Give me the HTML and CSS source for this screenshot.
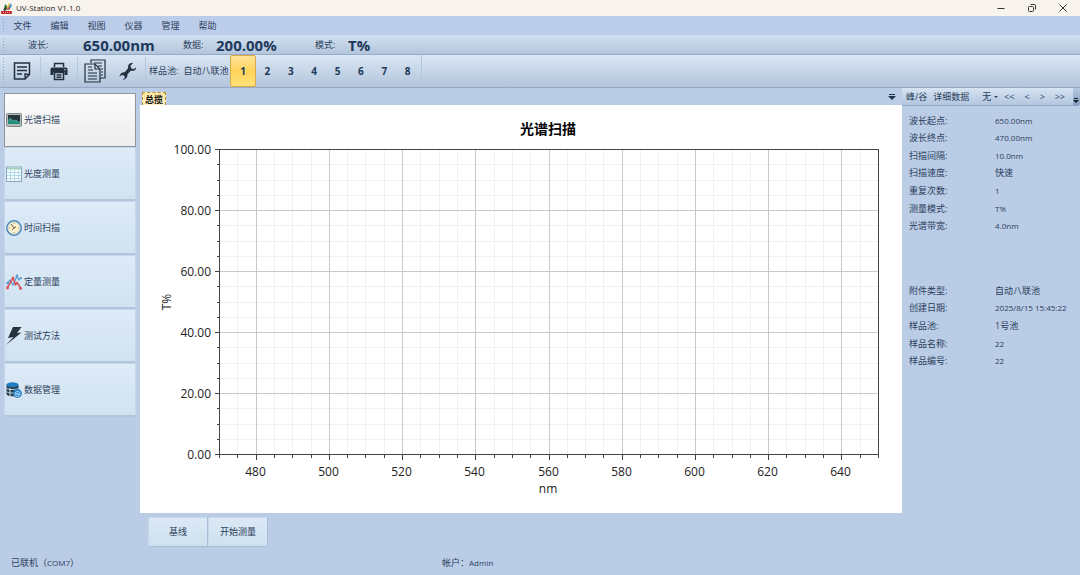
FILE: index.html
```html
<!DOCTYPE html>
<html lang="zh-CN">
<head>
<meta charset="utf-8">
<meta name="viewport" content="width=device-width, initial-scale=1">
<title>UV-Station V1.1.0</title>
<link rel="stylesheet" href="styles.css">
</head>
<body>
<div class="app">
  <header class="titlebar">
    <svg class="logo" viewBox="0 0 12 12" aria-hidden="true">
      <path d="M3 7 4 2l2 2-1 4z" fill="#1d8a4d"/><path d="M5 7 8 1l1 2-2 5z" fill="#f0b51e"/><path d="M6 8l4-7 1 3-3 4z" fill="#3aa0dc"/>
      <path d="M2 8 5 4l1 3-2 2z" fill="#3a3f46"/><path d="M6 8l3-4 0 3z" fill="#d33b2f"/>
      <rect x="0" y="9" width="11" height="3" rx="1" fill="#c8202a"/><path d="M2 10.500h7" stroke="#f4b9b9" stroke-dasharray="1 1"/>
    </svg>
    <span class="title">UV-Station V1.1.0</span>
    <div class="window-buttons">
      <button aria-label="最小化"><svg viewBox="0 0 10 10"><path d="M1.500 5.500h7"/></svg></button>
      <button aria-label="还原"><svg viewBox="0 0 10 10"><rect x="1.500" y="3.500" width="5" height="5" rx="1"/><path d="M3.500 1.500h4q1 0 1 1v4"/></svg></button>
      <button aria-label="关闭"><svg viewBox="0 0 10 10"><path d="M1.500 1.500l7 7M8.500 1.500l-7 7"/></svg></button>
    </div>
  </header>

  <nav class="menubar">
    <span class="grip"></span>
    <button>文件</button><button>编辑</button><button>视图</button><button>仪器</button><button>管理</button><button>帮助</button>
  </nav>

  <div class="readout">
    <span class="grip"></span>
    <span class="read-label wave">波长:</span><strong class="read-value wave-value">650.00nm</strong>
    <span class="read-label">数据:</span><strong class="read-value data-value">200.00%</strong>
    <span class="read-label">模式:</span><strong class="read-value">T%</strong>
  </div>

  <div class="toolbar">
    <span class="grip"></span>
    <button class="tool" aria-label="报告">
      <svg viewBox="0 0 20 20"><path d="M2.500 2h15v11.500L13 18H2.500z"/><path d="M17.500 13c-1 1-3 0-4.500 0 0 1.500 1 4-.5 5M5 6h10M5 9.500h10M5 13h5"/></svg>
    </button>
    <button class="tool" aria-label="打印">
      <svg viewBox="0 0 20 20"><path d="M5.500 6V2.500h9V6"/><path class="solid" stroke="none" d="M3 6.500h14q1.500 0 1.500 1.500v6h-3v-3h-11v3h-3V8q0-1.500 1.500-1.500z"/><path d="M5.500 11.500h9v7h-9zM7.500 14h5M7.500 16.300h5"/><circle cx="16" cy="8.700" r=".8" fill="#c5d5e6" stroke="none"/></svg>
    </button>
    <button class="tool large" aria-label="复制报告">
      <svg viewBox="0 0 24 24"><path d="M8 4V1h14v18h-5"/><path d="M2 5h10l5 5v13H2z"/><path d="M12 5v5h5M5 8h4M5 11h5M5 14h9M5 17h9M5 20h9M11 4h8M15 7h4M18 10h2M18 13h2M18 16h2"/></svg>
    </button>
    <button class="tool last" aria-label="设置">
      <svg viewBox="0 0 20 20"><path class="solid" stroke="none" d="M18.200 6.200 15.800 8.200 13.100 7.200 12.400 4.700 15 2.200C12.200 1.400 9.700 3.400 10 7.200L6.800 11.200C4.200 10.800 1.700 12.500 1.500 15.700L3.700 13.900 6.200 14.500 6.900 17 4.500 18.600C7.300 19 9.800 16.500 9.500 13.200L12.700 9.700C15.800 10.300 18.500 9 18.200 6.200z"/></svg>
    </button>
    <span class="cell-label">样品池:<span class="cell-kind">自动八联池</span></span>
    <div class="cells">
      <button class="cell active" aria-pressed="true">1</button><button class="cell">2</button><button class="cell">3</button><button class="cell">4</button><button class="cell">5</button><button class="cell">6</button><button class="cell">7</button><button class="cell">8</button>
    </div>
  </div>

  <div class="workspace">
    <aside class="sidebar">
      <button class="side-item selected">
        <svg viewBox="0 0 16 16"><rect x=".5" y="1.500" width="15" height="13" rx="1" fill="#b5bbbb" stroke="#7f8788"/><rect x="2" y="3" width="12" height="9" fill="#24363b"/><path d="M2 12V9l2-3 2 2 2 1 2-1 2 2 2 0v2z" fill="#218d7b"/><path d="M2 9l2-3 2 2 2 1 2-1 2 2h2" fill="none" stroke="#67c2b4" stroke-width=".7"/></svg>光谱扫描</button>
      <button class="side-item">
        <svg viewBox="0 0 16 16"><rect x=".5" y="1" width="15" height="14.500" fill="#f5fcff" stroke="#88a9bf"/><path d="M1 2.500h14" stroke="#a2d3b6" stroke-width="2"/><path d="M1 6.500h14M1 9.500h14M1 12.500h14M4.500 4v11M8.500 4v11M12.500 4v11" stroke="#a8d2e5" stroke-width=".8"/></svg>光度测量</button>
      <button class="side-item">
        <svg viewBox="0 0 16 16"><circle cx="8" cy="8" r="7.200" fill="#fbf0c7" stroke="#4685bd" stroke-width="1.500"/><circle cx="8" cy="8" r="6" fill="none" stroke="#b6cfdd" stroke-width=".7"/><path d="M5 4l3 4-2 2M8 8l2-1" fill="none" stroke="#665947"/><path d="M8 3v1M13 8h-1M8 13v-1M3 8h1" stroke="#a99b72"/></svg>时间扫描</button>
      <button class="side-item">
        <svg viewBox="0 0 16 16"><path d="M1 9.500 4 6l3 5 4-9 2 4 2-2" fill="none" stroke="#5a9ed2" stroke-width="1.300"/><g fill="#5a9ed2"><circle cx="1.500" cy="9" r="1.300"/><circle cx="11" cy="2" r="1.400"/><circle cx="15" cy="4" r="1.100"/></g><path d="M1 14l6-10 2.500 6.500L11 8.500l4 6" fill="none" stroke="#d65056" stroke-width="1.500"/><g fill="#d65056"><circle cx="1.500" cy="14" r="1.400"/><circle cx="7" cy="4" r="1.300"/><circle cx="9.500" cy="10" r="1.200"/><circle cx="14.500" cy="14.500" r="1.400"/></g></svg>定量测量</button>
      <button class="side-item">
        <svg viewBox="0 0 16 18"><path d="M7 0 15.500 0 11 6 15.500 5.500 0 18 7.500 10 2 11z" fill="#24333e"/></svg>测试方法</button>
      <button class="side-item">
        <svg viewBox="0 0 16 16"><path d="M.5 3v9c0 3 12 3 12 0V3z" fill="#293d4e"/><ellipse cx="6.500" cy="2.800" rx="6" ry="2.500" fill="#237dc2"/><path d="M.5 6c1 2 11 2 12 0M.5 9.500c1 2 11 2 12 0" fill="none" stroke="#b9d5e9"/><path d="M4 6v8" stroke="#d5e4ef"/><circle cx="11.500" cy="11.500" r="4.400" fill="#2382ca"/><path d="M13.500 13.500a2.500 2.500 0 1 1 .5-2q0 1.500-1 1.500t-1-1.500a.8.8 0 1 0-.5 1" fill="none" stroke="#e5f4ff" stroke-width=".8"/></svg>数据管理</button>
    </aside>

    <main class="center">
      <div class="tabs">
        <button class="tab">总揽</button>
        <button class="tab-menu" aria-label="标签列表"><svg viewBox="0 0 8 8"><path d="M1 1.500h6" stroke="#1d344e"/><path d="M0 3h8L4 7z" fill="#1d344e"/></svg></button>
      </div>
      <div class="chart-area">
        <svg class="chart" id="chart" viewBox="0 0 762 408" role="img" aria-label="光谱扫描"></svg>
      </div>
      <div class="actions"><button class="action">基线</button><button class="action">开始测量</button></div>
    </main>

    <aside class="details">
      <div class="detail-bar">
        <div class="detail-tools">
          <button class="peak">峰/谷</button><button class="more">详细数据</button>
          <span class="choice"><select aria-label="峰谷选择"><option>无</option></select></span>
          <div class="pager"><button>&lt;&lt;</button><button>&lt;</button><button>&gt;</button><button>&gt;&gt;</button></div>
        </div>
        <button class="overflow" aria-label="更多"><svg viewBox="0 0 6 6"><path d="M1 .5h4" stroke="#111e2c"/><path d="M0 2h6L3 5z" fill="#111e2c"/></svg></button>
      </div>
      <dl class="facts scan">
        <dt>波长起点:</dt><dd>650.00nm</dd>
        <dt>波长终点:</dt><dd>470.00nm</dd>
        <dt>扫描间隔:</dt><dd>10.0nm</dd>
        <dt>扫描速度:</dt><dd class="han">快速</dd>
        <dt>重复次数:</dt><dd>1</dd>
        <dt>测量模式:</dt><dd>T%</dd>
        <dt>光谱带宽:</dt><dd>4.0nm</dd>
      </dl>
      <dl class="facts sample">
        <dt>附件类型:</dt><dd class="han">自动八联池</dd>
        <dt>创建日期:</dt><dd>2025/8/15 15:45:22</dd>
        <dt>样品池:</dt><dd class="han">1号池</dd>
        <dt>样品名称:</dt><dd>22</dd>
        <dt>样品编号:</dt><dd>22</dd>
      </dl>
    </aside>
  </div>

  <footer class="statusbar"><span>已联机（<span class="latin">COM7</span>）</span><span>帐户：<span class="latin">Admin</span></span></footer>
</div>
<script src="chart.js"></script>
</body>
</html>
```

FILE: styles.css
```css
* { box-sizing: border-box; }

body {
  margin: 0;
  background: #bacce6;
  color: #2b405c;
  font-family: "Open Sans", "Noto Sans CJK SC", sans-serif;
  font-size: 9px;
  line-height: 12px;
}

button, select {
  margin: 0;
  padding: 0;
  border: 0;
  background: none;
  color: inherit;
  font: inherit;
  white-space: nowrap;
}

svg { display: block; flex: none; }

.app { display: flex; flex-direction: column; min-height: 100vh; }

.titlebar {
  display: flex;
  align-items: center;
  height: 16px;
  padding-left: 1px;
  background: #f8f3ec;
  color: #252525;
}
.logo { width: 12px; height: 12px; }
.title { margin-left: 3px; font-size: 8px; }
.window-buttons { display: flex; margin-left: auto; padding-right: 2px; }
.window-buttons button {
  display: flex;
  align-items: center;
  justify-content: center;
  width: 31px;
  height: 14px;
}
.window-buttons svg { width: 10px; height: 10px; fill: none; stroke: #333; }

.grip {
  align-self: stretch;
  width: 1px;
  margin: 3px 0 3px 3px;
  background: repeating-linear-gradient(#8ba2c2 0 1px, transparent 1px 3px) 0 0 / 1px 100% no-repeat;
}

.menubar { display: flex; align-items: center; height: 19px; background: #bccde9; }
.menubar button { width: 37px; }

.readout {
  display: flex;
  align-items: center;
  height: 20px;
  background: linear-gradient(#d2e1f0, #b3c5dc);
  border-bottom: 1px solid #99abc4;
}
.read-label { width: 33px; }
.wave { width: 56px; padding-left: 24px; }
.read-value {
  color: #1e395b;
  font-size: 15px;
  line-height: 16px;
}
.wave-value { width: 100px; margin-left: 23px; }
.data-value { width: 99px; }

.toolbar {
  display: flex;
  align-items: center;
  height: 33px;
  background: linear-gradient(#dae7f4, #b3c5dc);
  border-bottom: 1px solid #99abc4;
}
.tool {
  display: flex;
  align-items: center;
  justify-content: center;
  width: 37px;
  height: 28px;
  border-right: 1px solid #b5c7db;
}
.tool svg { width: 20px; height: 20px; fill: none; stroke: #23303e; stroke-width: 1.5; }
.tool .solid { fill: #23303e; }
.tool.large { width: 33px; border-right: 0; }
.tool.large svg { width: 24px; height: 26px; stroke-width: 1.2; }
.tool.last { width: 35px; }
.cell-label { display: flex; align-items: center; margin-left: 3px; }
.cell-kind { margin-left: 5px; }
.cells { display: flex; align-items: center; width: 192px; margin-left: 2px; padding-right: 2px; border-right: 1px solid #b5c7db; }
.cell {
  flex: 1;
  height: 32px;
  color: #203956;
  font-size: 10px;
  font-weight: 700;
}
.cell.active {
  border: 1px solid #dda94d;
  border-radius: 2px;
  background: linear-gradient(#ffe39a, #ffd45a 50%, #ffe27a);
}

.workspace { display: flex; flex: 1; }

.sidebar { display: flex; flex: none; flex-direction: column; width: 140px; padding: 5px 4px; }
.side-item {
  display: flex;
  align-items: center;
  gap: 2px;
  height: 54px;
  padding-left: 1px;
  border: 1px solid #c7d7e9;
  border-bottom: 2px solid #b2c5da;
  background: linear-gradient(#deebf8, #d0e2f0);
}
.side-item svg { width: 16px; height: 18px; }
.side-item.selected {
  border: 1px solid #8d959f;
  background: linear-gradient(#fcfcfc, #ededee);
}

.center { display: flex; flex: 1; flex-direction: column; min-width: 0; }
.tabs { display: flex; align-items: flex-end; justify-content: space-between; height: 17px; padding: 0 6px 0 2px; }
.tab {
  width: 24px;
  height: 13px;
  border: 1px dashed #b78c36;
  border-bottom: 0;
  background: linear-gradient(#ffe79b, #fff2c5);
  color: #111;
  font-weight: 700;
  line-height: 11px;
}
.tab-menu { align-self: center; }
.tab-menu svg { width: 8px; height: 8px; }
.chart-area { flex: 1; background: #fff; }
.chart { width: 100%; height: auto; }
.chart text { fill: #222; font-size: 12px; }
.chart .chart-title { fill: #000; font-size: 14px; font-weight: 700; }
.chart .minor { stroke: #f1f1f1; }
.chart .major { stroke: #c9c9c9; }
.chart .axis { fill: none; stroke: #444; }
.chart line, .chart rect { shape-rendering: crispEdges; }

.actions { display: flex; height: 37px; padding: 4px 8px 3px; }
.action {
  width: 60px;
  border: 1px solid #c5d9eb;
  border-right-color: #aabfd7;
  border-bottom-color: #aabfd7;
  background: linear-gradient(#dce9f6, #cee1ee);
}

.details { flex: none; width: 178px; }
.detail-bar { display: flex; height: 18px; }
.detail-tools {
  display: flex;
  flex: 1;
  align-items: center;
  padding-left: 4px;
  border-bottom: 1px solid #94a9c6;
  background: linear-gradient(#d6e4f2, #b3c6df);
}
.more { margin-left: 6px; }
.choice { display: flex; align-items: center; margin-left: 13px; }
.choice::after {
  content: "";
  margin-left: 2px;
  border: 2px solid transparent;
  border-top-color: #2b405c;
  border-bottom: 0;
}
.choice select { appearance: none; width: 10px; }
.pager { display: flex; flex: 1; justify-content: space-between; margin: 0 8px 0 6px; }
.overflow {
  display: flex;
  align-items: flex-end;
  width: 7px;
  padding-bottom: 2px;
  border-radius: 0 3px 3px 0;
  background: linear-gradient(#b3c7e1, #879fc0);
}
.overflow svg { width: 6px; height: 6px; }

.facts {
  display: grid;
  grid-template-columns: 86px 1fr;
  grid-auto-rows: 1fr;
  align-items: center;
  margin: 0;
  padding-left: 7px;
}
.facts dd { margin: 0; font-size: 8px; white-space: nowrap; }
.facts .han { font-size: 9px; }
.scan { height: 123px; margin-top: 6px; }
.sample { height: 88px; margin-top: 47px; }

.latin { font-size: 8px; }
.statusbar { display: grid; grid-template-columns: 431px 1fr; align-items: center; height: 25px; padding-left: 11px; }
```

FILE: chart.js
```js
const chart = document.getElementById("chart");
const plot = { left: 79, right: 738, top: 44, bottom: 349 };
const range = { x0: 470, x1: 650, y0: 0, y1: 100 };

const px = v => Math.round(plot.left + (v - range.x0) / (range.x1 - range.x0) * (plot.right - plot.left)) + 0.5;
const py = v => Math.round(plot.bottom - (v - range.y0) / (range.y1 - range.y0) * (plot.bottom - plot.top)) + 0.5;

function add(name, attributes, text) {
  const node = document.createElementNS("http://www.w3.org/2000/svg", name);
  for (const key in attributes) node.setAttribute(key, attributes[key]);
  if (text) node.textContent = text;
  chart.appendChild(node);
}

function line(x1, y1, x2, y2, kind) {
  add("line", { x1, y1, x2, y2, class: kind });
}

const left = px(range.x0), right = px(range.x1), top_ = py(range.y1), bottom = py(range.y0);

for (const kind of ["minor", "major"]) {
  for (let x = range.x0 + 5; x < range.x1; x += 5) {
    if ((x % 20 === 0) === (kind === "major")) line(px(x), top_, px(x), bottom, kind);
  }
  for (let y = 5; y < range.y1; y += 5) {
    if ((y % 20 === 0) === (kind === "major")) line(left, py(y), right, py(y), kind);
  }
}

add("rect", { x: left, y: top_, width: right - left, height: bottom - top_, class: "axis" });

for (let x = range.x0; x <= range.x1; x += 5) {
  const major = x % 20 === 0;
  line(px(x), bottom, px(x), bottom + (major ? 5 : 3), "axis");
  if (major) add("text", { x: px(x) - 1, y: 371, "text-anchor": "middle" }, String(x));
}
for (let y = 0; y <= range.y1; y += 5) {
  const major = y % 20 === 0;
  line(left - (major ? 5 : 3), py(y), left, py(y), "axis");
  if (major) add("text", { x: 71, y: py(y) + 4, "text-anchor": "end" }, y.toFixed(2));
}

add("text", { x: 408, y: 388, "text-anchor": "middle" }, "nm");
add("text", { x: 31, y: 197, "text-anchor": "middle", transform: "rotate(-90 31 197)" }, "T%");
add("text", { x: 408, y: 29, "text-anchor": "middle", class: "chart-title" }, "光谱扫描");
```
